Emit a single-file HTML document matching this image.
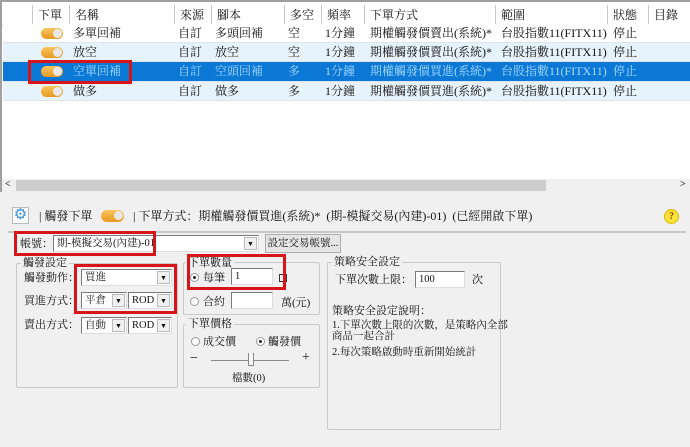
<!DOCTYPE html><html><head><meta charset="utf-8"><style>
*{margin:0;padding:0;box-sizing:border-box}
body{width:690px;height:447px;background:#f0f0f0;position:relative;overflow:hidden;font-family:"Liberation Serif","Noto Serif CJK SC","Noto Sans CJK TC",serif;font-size:12px;color:#111}
.a{position:absolute;white-space:nowrap;line-height:14px}
.tbl{position:absolute;left:0;top:0;width:690px;height:192px;background:#fff;border-left:2px solid #a0a0a0;border-top:2px solid #a0a0a0}
.hdr{position:absolute;top:3px;height:21px;border-right:1px solid #c8c8c8;border-bottom:1px solid #c8c8c8;padding-left:5px;line-height:20px;background:#fff}
.row{position:absolute;left:3px;width:687px;height:19px;border-bottom:1px solid #dde3ea}
.c{position:absolute;top:0;line-height:19px}
.tog{position:absolute;width:22px;height:11px;border-radius:6px;background:linear-gradient(#f9c460,#e89a20)}
.tog:after{content:"";position:absolute;right:1px;top:1px;width:9px;height:9px;border-radius:50%;background:#e8e8e8}
.red{position:absolute;border:3px solid #d7141a}
.grp{position:absolute;border:1px solid #c9c9c9;border-radius:2px}
.gl{position:absolute;top:-8px;left:4px;background:#f0f0f0;padding:0 2px;line-height:14px;font-size:11px}
.inp{position:absolute;background:#fff;border:1px solid #7a7a7a;border-right-color:#ddd;border-bottom-color:#ddd;height:17px;line-height:15px;padding-left:3px;font-size:10.5px;overflow:hidden;white-space:nowrap}
.dd{position:absolute;top:1px;right:1px;width:13px;height:13px;background:#f0f0f0;border:1px solid #bbb;font-size:7px;text-align:center;line-height:12px}
.rad{position:absolute;width:9px;height:9px;border-radius:50%;border:1px solid #999;background:#fff}
.rad.on:after{content:"";position:absolute;left:2px;top:2px;width:3px;height:3px;border-radius:50%;background:#222}
.s{font-size:11px}
</style></head><body>
<div class="tbl">
<div class="hdr" style="left:0;width:31px"></div>
<div class="hdr" style="left:31px;width:37px">下單</div>
<div class="hdr" style="left:68px;width:105px">名稱</div>
<div class="hdr" style="left:173px;width:37px">來源</div>
<div class="hdr" style="left:210px;width:73px">腳本</div>
<div class="hdr" style="left:283px;width:37px">多空</div>
<div class="hdr" style="left:320px;width:43px">頻率</div>
<div class="hdr" style="left:363px;width:131px">下單方式</div>
<div class="hdr" style="left:494px;width:112px">範圍</div>
<div class="hdr" style="left:606px;width:41px">狀態</div>
<div class="hdr" style="left:647px;width:43px">目錄</div>
</div>
<div class="row" style="top:24px;background:#fff"><div class="tog" style="left:38px;top:4px"></div><span class="c" style="left:70px">多單回補</span><span class="c" style="left:175px">自訂</span><span class="c" style="left:212px">多頭回補</span><span class="c" style="left:285px">空</span><span class="c" style="left:322px">1分鐘</span><span class="c" style="left:367px">期權觸發價賣出(系統)*</span><span class="c" style="left:498px">台股指數11(FITX11)</span><span class="c" style="left:610px">停止</span></div>
<div class="row" style="top:43px;background:#e6f3fc"><div class="tog" style="left:38px;top:4px"></div><span class="c" style="left:70px">放空</span><span class="c" style="left:175px">自訂</span><span class="c" style="left:212px">放空</span><span class="c" style="left:285px">空</span><span class="c" style="left:322px">1分鐘</span><span class="c" style="left:367px">期權觸發價賣出(系統)*</span><span class="c" style="left:498px">台股指數11(FITX11)</span><span class="c" style="left:610px">停止</span></div>
<div class="row" style="top:62px;height:20px;background:#0b78d6;color:#a9dcff"><div class="tog" style="left:38px;top:4px"></div><span class="c" style="left:70px">空單回補</span><span class="c" style="left:175px">自訂</span><span class="c" style="left:212px">空頭回補</span><span class="c" style="left:285px">多</span><span class="c" style="left:322px">1分鐘</span><span class="c" style="left:367px">期權觸發價買進(系統)*</span><span class="c" style="left:498px">台股指數11(FITX11)</span><span class="c" style="left:610px">停止</span></div>
<div class="row" style="top:82px;background:#e6f3fc"><div class="tog" style="left:38px;top:4px"></div><span class="c" style="left:70px">做多</span><span class="c" style="left:175px">自訂</span><span class="c" style="left:212px">做多</span><span class="c" style="left:285px">多</span><span class="c" style="left:322px">1分鐘</span><span class="c" style="left:367px">期權觸發價買進(系統)*</span><span class="c" style="left:498px">台股指數11(FITX11)</span><span class="c" style="left:610px">停止</span></div>
<div class="red" style="left:28px;top:60px;width:104px;height:24px"></div>
<div class="a" style="left:2px;top:179px;width:688px;height:13px;background:#f0f0f0"></div>
<div class="a" style="left:16px;top:180px;width:530px;height:11px;background:#cdcdcd"></div>
<div class="a" style="left:5px;top:178px;font-size:10px;font-weight:bold;color:#333">&lt;</div>
<div class="a" style="left:680px;top:178px;font-size:10px;font-weight:bold;color:#333">&gt;</div>
<div class="a" style="left:12px;top:207px;width:17px;height:17px;border:1px solid #bbb;background:#fafafa;color:#3a8fe0;font-size:15px;line-height:15px;text-align:center">⚙</div>
<div class="a" style="left:39px;top:209px;font-size:12px">|&nbsp;觸發下單</div>
<div class="tog" style="left:101px;top:210px;width:23px;height:12px"></div>
<div class="a" style="left:133px;top:209px;font-size:12px">|&nbsp;下單方式：期權觸發價買進(系統)*&nbsp;&nbsp;(期-模擬交易(內建)-01)&nbsp;&nbsp;(已經開啟下單)</div>
<div class="a" style="left:664px;top:209px;width:15px;height:15px;border-radius:50%;background:#f7e33a;border:1px solid #d8b800;color:#a05000;font-size:10px;text-align:center;line-height:13px;font-weight:bold">?</div>
<div class="a" style="left:8px;top:231px;width:678px;height:2px;background:#c8c8c8"></div>
<div class="a s" style="left:20px;top:237px">帳號：</div>
<div class="inp" style="left:53px;top:235px;width:206px">期-模擬交易(內建)-01<div class="dd">▼</div></div>
<div class="a" style="left:265px;top:234px;width:76px;height:19px;border:1px solid #adadad;background:#e5e5e5;text-align:center;line-height:17px;font-size:10.5px">設定交易帳號...</div>
<div class="red" style="left:14px;top:231px;width:142px;height:25px"></div>
<div class="grp" style="left:16px;top:263px;width:162px;height:125px"><span class="gl">觸發設定</span></div>
<div class="a s" style="left:24px;top:271px">觸發動作：</div>
<div class="inp" style="left:81px;top:269px;width:91px">買進<div class="dd">▼</div></div>
<div class="a s" style="left:24px;top:294px">買進方式：</div>
<div class="inp" style="left:81px;top:292px;width:46px">平倉<div class="dd">▼</div></div>
<div class="inp" style="left:128px;top:292px;width:44px">ROD<div class="dd">▼</div></div>
<div class="a s" style="left:24px;top:318px">賣出方式：</div>
<div class="inp" style="left:81px;top:317px;width:46px">自動<div class="dd">▼</div></div>
<div class="inp" style="left:128px;top:317px;width:44px">ROD<div class="dd">▼</div></div>
<div class="red" style="left:74px;top:264px;width:103px;height:50px"></div>
<div class="grp" style="left:183px;top:262px;width:137px;height:53px"><span class="gl" style="left:2px;top:-7px">下單數量</span></div>
<div class="rad on" style="left:190px;top:273px"></div><div class="a s" style="left:203px;top:271px">每筆</div>
<div class="inp" style="left:231px;top:268px;width:42px">1</div>
<div class="a" style="left:279px;top:274px;width:8px;height:8px;border:1px solid #333"></div>
<div class="rad" style="left:190px;top:297px"></div><div class="a s" style="left:203px;top:295px">合約</div>
<div class="inp" style="left:231px;top:292px;width:42px"></div>
<div class="a s" style="left:281px;top:296px">萬(元)</div>
<div class="red" style="left:187px;top:254px;width:99px;height:36px"></div>
<div class="grp" style="left:183px;top:324px;width:137px;height:64px"><span class="gl" style="left:2px">下單價格</span></div>
<div class="rad" style="left:191px;top:337px"></div><div class="a s" style="left:203px;top:335px">成交價</div>
<div class="rad on" style="left:256px;top:337px"></div><div class="a s" style="left:268px;top:335px">觸發價</div>
<div class="a" style="left:190px;top:352px;font-size:14px">−</div>
<div class="a" style="left:211px;top:360px;width:78px;height:1px;background:#888"></div>
<div class="a" style="left:248px;top:353px;width:6px;height:13px;border:1px solid #888;border-top:none;background:#f7f7f7"></div>
<div class="a" style="left:302px;top:351px;font-size:14px">+</div>
<div class="a" style="left:232px;top:372px;font-size:10.5px">檔數(0)</div>
<div class="grp" style="left:327px;top:262px;width:174px;height:168px"><span class="gl">策略安全設定</span></div>
<div class="a s" style="left:335px;top:273px">下單次數上限：</div>
<div class="inp" style="left:415px;top:271px;width:50px">100</div>
<div class="a s" style="left:472px;top:273px">次</div>
<div class="a s" style="left:332px;top:304px">策略安全設定說明：</div>
<div class="a" style="left:332px;top:320px;font-size:10.5px;line-height:12px">1.下單次數上限的次數，是策略內全部</div>
<div class="a" style="left:332px;top:331px;font-size:10.5px;line-height:12px">商品一起合計</div>
<div class="a" style="left:332px;top:346px;font-size:10.5px">2.每次策略啟動時重新開始統計</div>
</body></html>
